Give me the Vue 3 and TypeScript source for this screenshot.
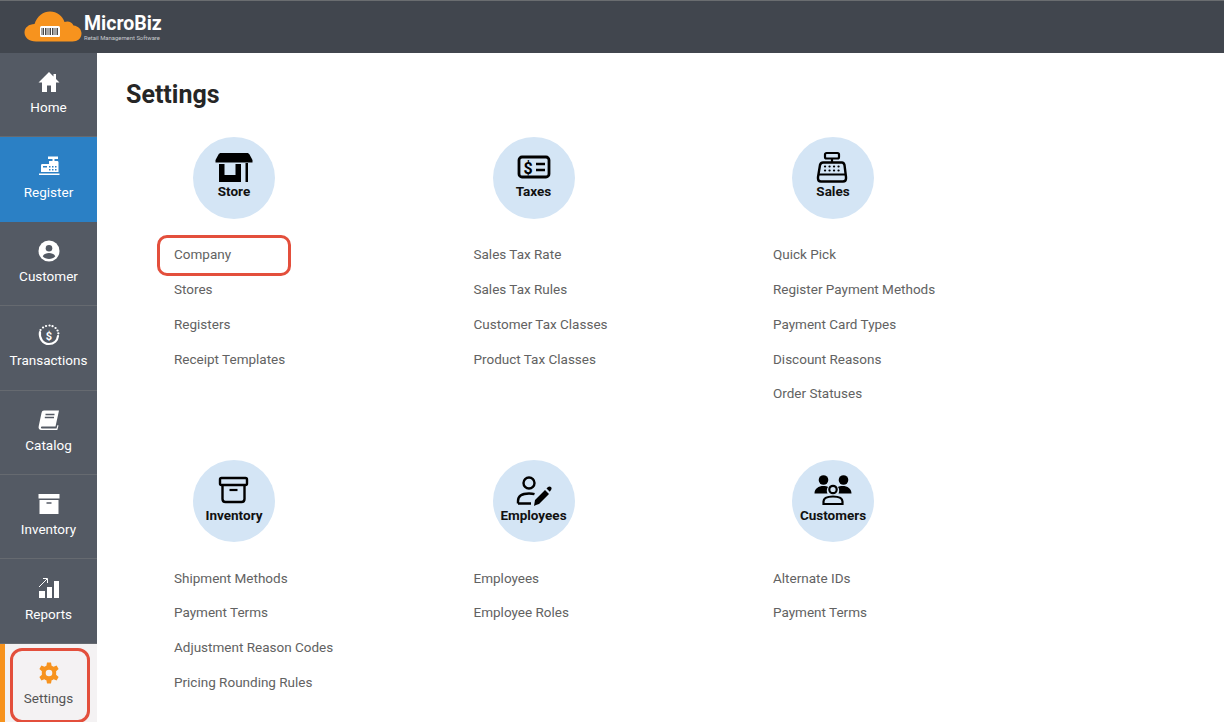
<script setup lang="ts">
const nav = [
  { label: 'Home', icon: 'home' },
  { label: 'Register', icon: 'register', active: true },
  { label: 'Customer', icon: 'customer' },
  { label: 'Transactions', icon: 'transactions' },
  { label: 'Catalog', icon: 'catalog' },
  { label: 'Inventory', icon: 'inventory' },
  { label: 'Reports', icon: 'reports' },
]
const groups = [
  { title: 'Store', icon: 'store', links: ['Company', 'Stores', 'Registers', 'Receipt Templates'] },
  { title: 'Taxes', icon: 'taxes', links: ['Sales Tax Rate', 'Sales Tax Rules', 'Customer Tax Classes', 'Product Tax Classes'] },
  { title: 'Sales', icon: 'sales', links: ['Quick Pick', 'Register Payment Methods', 'Payment Card Types', 'Discount Reasons', 'Order Statuses'] },
  { title: 'Inventory', icon: 'box', links: ['Shipment Methods', 'Payment Terms', 'Adjustment Reason Codes', 'Pricing Rounding Rules'] },
  { title: 'Employees', icon: 'employees', links: ['Employees', 'Employee Roles'] },
  { title: 'Customers', icon: 'customers', links: ['Alternate IDs', 'Payment Terms'] },
]
</script>

<template>
  <div class="app">
    <header class="topbar">
      <div class="logo">
        <svg class="cloud" width="58" height="31" viewBox="0 0 58 31">
          <path d="M12 30.500C5 30.500 0.500 26.500 0.500 21.500C0.500 16.500 5 13 10.500 13C13 5 19.500 0.500 26 0.500C33 0.500 38.500 5 40.500 11C44 9.500 48 11 49.500 14.500C54.500 15 57.500 18.500 57.500 22.500C57.500 27.500 53.500 30.500 48.500 30.500Z" fill="#f7931e" />
          <rect x="16" y="15" width="20" height="11" rx="1.500" fill="#fff" />
          <path d="M18 17v7M19.500 17v7M21.500 17v7M23 17v7M25 17v7M26.500 17v7M28.500 17v7M30 17v7M32 17v7M33.500 17v7" stroke="#4a4a4a" stroke-width="1" />
        </svg>
        <div class="wordmark">
          <div class="brand">MicroBiz</div>
          <div class="tag">Retail Management Software</div>
        </div>
      </div>
    </header>
    <div class="body">
      <aside class="sidebar">
        <div v-for="n in nav" :key="n.label" class="nav-item" :class="{ active: n.active }">
          <svg class="nav-icon" width="24" height="24" viewBox="0 0 24 24" fill="#fff">
            <path v-if="n.icon === 'home'" d="M12 2L1.500 12.500H5V22H10V15.500H14V22H19V12.500H22.500L19 9V4H16.500V6.500Z" />
            <g v-else-if="n.icon === 'register'">
              <path d="M11 2.500H21V5H17.500V7H20C21 7 21.500 7.500 21.500 8.500V18H4V11.500C4 10.500 4.500 10 5.500 10H12V7H15.500V5H11Z" />
              <path d="M2 19.500H22.500V21H2Z" />
              <path d="M12 12h1.500v1.500H12zM15 12h1.500v1.500H15zM18 12h1.500v1.500H18zM12 15h1.500v1.500H12zM15 15h1.500v1.500H15zM18 15h1.500v1.500H18z" fill="#2b80c5" />
              <path d="M6 12h4v1.500H6z" fill="#2b80c5" />
            </g>
            <g v-else-if="n.icon === 'customer'">
              <circle cx="12" cy="12" r="10.500" />
              <circle cx="12" cy="9.300" r="3.300" fill="#545a64" />
              <path d="M5.700 17.200C7 14.800 9.500 14 12 14C14.500 14 17 14.800 18.300 17.200C16.800 19 14.500 20 12 20C9.500 20 7.200 19 5.700 17.200Z" fill="#545a64" />
            </g>
            <g v-else-if="n.icon === 'transactions'">
              <path d="M3 9C2 14.500 5.500 21 12 21C17 21 20.500 17.500 21 13" fill="none" stroke="#fff" stroke-width="2.200" stroke-linecap="round" />
              <path d="M3.500 7l.1 0M6 4.500l.1 0M9 3l.1 0M12.500 2.500l.1 0M15.500 3.200l.1 0M18.500 5l.1 0M20.500 7.500l.1 0M21.300 10.300l.1 0" stroke="#fff" stroke-width="2.200" stroke-linecap="round" />
              <text x="12" y="16.500" text-anchor="middle" font-size="11" font-weight="700" font-family="Roboto, sans-serif">$</text>
            </g>
            <g v-else-if="n.icon === 'catalog'">
              <path d="M7 2.500H22L18.500 18.500H5C3.500 18.500 3.500 20.500 5 20.500H19.500L20.500 17L21.500 17.500L20.300 22H4.500C2 22 1.200 20.300 1.700 18.300L4.500 5C4.900 3.300 5.700 2.500 7 2.500Z" />
              <path d="M8.500 6.500H17.500M7.800 9.500H17" stroke="#545a64" stroke-width="1.300" />
            </g>
            <g v-else-if="n.icon === 'inventory'">
              <path d="M1.500 2H22.500V6.500H1.500Z" />
              <path d="M2.500 8H21.500V22H2.500Z" />
              <path d="M9.500 11H14.500" stroke="#545a64" stroke-width="1.500" />
            </g>
            <g v-else>
              <path d="M2 15h6v7H2zM10 11h5v11h-5zM17 5h5v17h-5z" />
              <path d="M2 11L10 3M6 2.500h4.500V7" fill="none" stroke="#fff" stroke-width="1" />
            </g>
          </svg>
          <span class="nav-label">{{ n.label }}</span>
        </div>
        <div class="nav-item current">
          <svg class="nav-icon" width="24" height="24" viewBox="0 0 24 24" fill="#f7931e">
            <path fill-rule="evenodd" d="M10 1.500H14L14.600 4.700C15.300 5 16 5.300 16.600 5.800L19.600 4.600L21.600 8.100L19.100 10.200C19.200 11 19.200 13 19.100 13.800L21.600 15.900L19.600 19.400L16.600 18.200C16 18.700 15.300 19 14.600 19.300L14 22.500H10L9.400 19.300C8.700 19 8 18.700 7.400 18.200L4.400 19.400L2.400 15.900L4.900 13.800C4.800 13 4.800 11 4.900 10.200L2.400 8.100L4.400 4.600L7.400 5.800C8 5.300 8.700 5 9.400 4.700ZM12 8.700A3.300 3.300 0 1 0 12 15.300A3.300 3.300 0 1 0 12 8.700Z" />
          </svg>
          <span class="nav-label">Settings</span>
          <div class="mark mark-settings"></div>
        </div>
      </aside>
      <main class="main">
        <h1 class="title">Settings</h1>
        <div class="grid">
          <section v-for="g in groups" :key="g.title" class="group">
            <div class="badge">
              <svg class="badge-icon" width="40" height="32" viewBox="0 0 40 32" fill="none" stroke="#000" stroke-width="2.600">
                <g v-if="g.icon === 'store'">
                  <path d="M7 2H33C34 2 35 2.500 35.500 3.500L38.500 9V11.500H1.500V9L4.500 3.500C5 2.500 6 2 7 2Z" fill="#000" stroke="none" />
                  <path d="M5 13H10.500V24H21.500V13H27V31H5Z" fill="#000" stroke="none" />
                  <path d="M31.500 12H34V31H31.500Z" fill="#000" stroke="none" />
                </g>
                <g v-else-if="g.icon === 'taxes'">
                  <rect x="5" y="6" width="30" height="20" rx="3" stroke-width="2.800" />
                  <path d="M22 13H31M22 19H31" stroke-width="2.600" />
                  <text x="14" y="22.500" text-anchor="middle" font-size="16" font-weight="700" font-family="Roboto, sans-serif" fill="#000" stroke="none">$</text>
                </g>
                <g v-else-if="g.icon === 'sales'">
                  <rect x="12" y="2" width="14" height="5.500" rx="1.500" stroke-width="2.200" />
                  <path d="M19 8V11" stroke-width="2.200" />
                  <path d="M10 11.500H29C30.500 11.500 31 12.500 31.500 14L33 26V27.500C33 29 32 30.500 30 30.500H8C6 30.500 5 29 5 27.500V26L7 14C7.500 12.500 8.500 11.500 10 11.500Z" stroke-width="2.400" />
                  <path d="M6 23.500H32" stroke-width="2" />
                  <path d="M12 15.500h.1M16.500 15.500h.1M21 15.500h.1M25.500 15.500h.1M12 19.500h.1M16.500 19.500h.1M21 19.500h.1M25.500 19.500h.1" stroke-width="2.200" stroke-linecap="round" />
                </g>
                <g v-else-if="g.icon === 'box'">
                  <rect x="6" y="4" width="27" height="7" rx="1.500" stroke-width="2.400" />
                  <path d="M8.500 11V25C8.500 27 9.500 28 11.500 28H27.500C29.500 28 30.500 27 30.500 25V11" stroke-width="2.400" />
                  <path d="M15.500 16H23.500" stroke-width="2.200" />
                </g>
                <g v-else-if="g.icon === 'employees'">
                  <circle cx="15" cy="9" r="5.500" stroke-width="2.400" />
                  <path d="M4 29.500V27C4 21.500 8.500 19.500 15 19.500C17 19.500 19 19.700 20.500 20.200M4 29.500H17" stroke-width="2.400" />
                  <path d="M22 31L20 32L21 26L31 16L35 20L25 30Z" fill="#000" stroke="none" />
                  <path d="M32.500 14.500L34 13C35 12.200 36 12.200 37 13C37.800 14 37.800 15 37 16L35.800 17.700Z" fill="#000" stroke="none" />
                </g>
                <g v-else>
                  <circle cx="10.500" cy="6" r="4.800" fill="#000" stroke="none" />
                  <circle cx="30.500" cy="6" r="4.800" fill="#000" stroke="none" />
                  <path d="M1.500 19.500C1.500 14.500 5.500 12 10.500 12C12.500 12 14 12.300 15 13C13.500 15 13.500 17.500 14.500 19.500Z" fill="#000" stroke="none" />
                  <path d="M38.500 19.500C38.500 14.500 34.500 12 29.500 12C27.500 12 26 12.300 25 13C26.500 15 26.500 17.500 25.500 19.500Z" fill="#000" stroke="none" />
                  <circle cx="20" cy="15.500" r="3.700" stroke-width="2.200" />
                  <path d="M10.500 30V27.500C10.500 24 15 22.500 20 22.500C25 22.500 29.500 24 29.500 27.500V30Z" stroke-width="2.200" />
                </g>
              </svg>
              <span class="badge-title">{{ g.title }}</span>
            </div>
            <ul class="links">
              <li v-for="l in g.links" :key="l" class="link">
                {{ l }}
                <div v-if="l === 'Company'" class="mark mark-company"></div>
              </li>
            </ul>
          </section>
        </div>
      </main>
    </div>
  </div>
</template>

<style scoped>
.app { width: 1224px; height: 722px; overflow: hidden; display: flex; flex-direction: column; font-family: Roboto, "Liberation Sans", sans-serif; background: #fff; }
.topbar { height: 53px; flex: none; box-sizing: border-box; background: #41464e; border-top: 1px solid #6a6d70; display: flex; align-items: center; padding-left: 24px; }
.logo { display: flex; align-items: center; gap: 2px; margin-top: -1px; }
.cloud { display: block; }
.wordmark { color: #fff; display: flex; flex-direction: column; margin-top: 2px; }
.brand { font-size: 19.500px; line-height: 17px; font-weight: 700; white-space: nowrap; }
.tag { font-size: 5.900px; line-height: 6px; margin-top: 3px; color: #c9ccd0; white-space: nowrap; }
.body { flex: 1; display: flex; min-height: 0; }
.sidebar { width: 97px; flex: none; background: #545a64; display: flex; flex-direction: column; }
.nav-item { height: 84.400px; flex: none; box-sizing: border-box; border-bottom: 1px solid #666a70; display: flex; flex-direction: column; align-items: center; padding-top: 17px; color: #fff; position: relative; }
.nav-item.active { background: #2b80c5; border-bottom-color: #2b80c5; }
.nav-item.current { flex: 1; height: auto; background: #f4f2f3; color: #555; border-left: 5px solid #f7931e; border-bottom: 0; padding-right: 5px; }
.nav-icon { display: block; }
.nav-label { font-size: 13.500px; line-height: 18px; margin-top: 4.300px; white-space: nowrap; }
.mark { position: absolute; box-sizing: border-box; border: 3px solid #e34f3c; border-radius: 10px; pointer-events: none; }
.mark-settings { left: 5px; top: 4px; width: 80px; height: 75px; border-radius: 12px; }
.main { flex: 1; padding: 27px 0 0 29px; min-width: 0; }
.title { margin: 0; font-size: 25px; line-height: 30px; font-weight: 700; color: #262626; }
.grid { display: grid; grid-template-columns: repeat(3, 299.500px); grid-auto-rows: 323.400px; margin-top: 27px; padding-left: 48px; }
.group { display: flex; flex-direction: column; }
.badge { width: 82px; height: 82px; border-radius: 50%; background: #d4e5f5; margin-left: 19px; position: relative; display: flex; flex-direction: column; align-items: center; }
.badge-icon { margin-top: 14px; display: block; }
.badge-title { position: absolute; top: 46.400px; left: 50%; transform: translateX(-50%); font-size: 13.500px; line-height: 16px; font-weight: 700; color: #111; white-space: nowrap; }
.links { list-style: none; margin: 18.300px 0 0; padding: 0; }
.link { position: relative; height: 34.800px; line-height: 34.800px; font-size: 13.500px; color: #626262; white-space: nowrap; }
.mark-company { left: -17px; top: -2.300px; width: 134px; height: 41px; }
</style>
